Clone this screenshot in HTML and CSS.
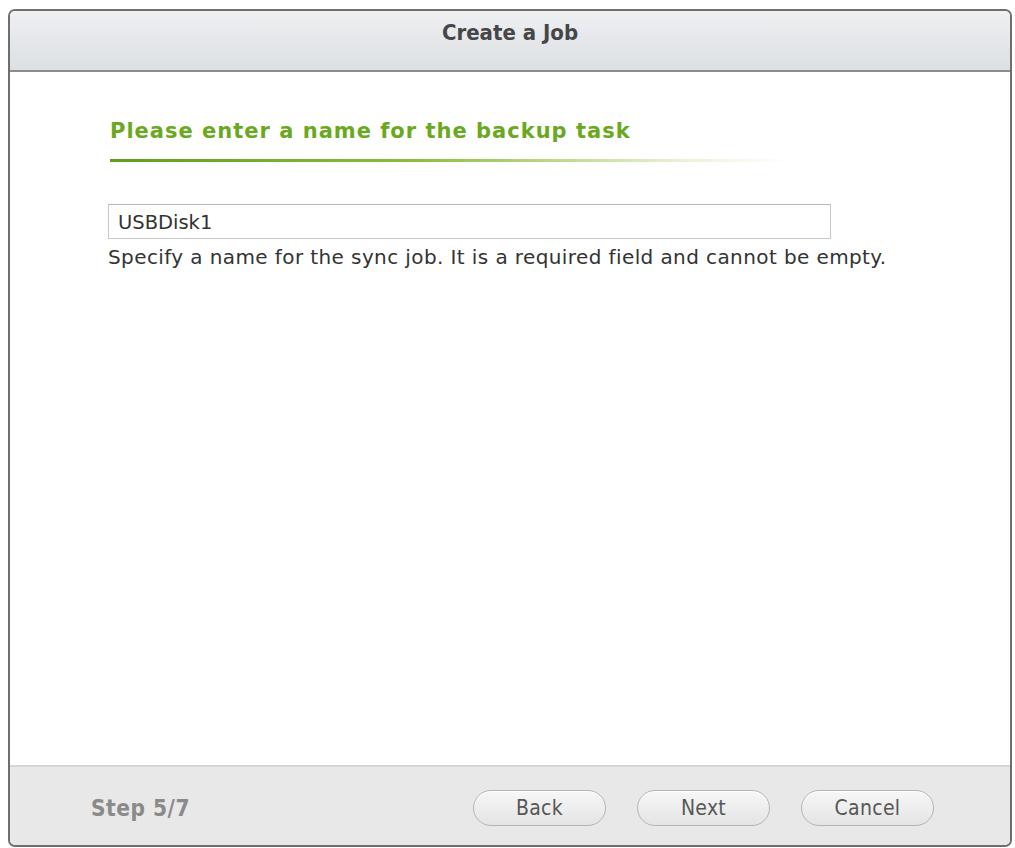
FILE: index.html
```html
<!DOCTYPE html>
<html>
<head>
<meta charset="utf-8">
<link rel="stylesheet" href="styles.css">
</head>
<body>
<div class="dialog">
  <div class="header">Create a Job</div>
  <div class="content">
    <h2 class="heading">Please enter a name for the backup task</h2>
    <div class="rule"></div>
    <input class="field" type="text" value="USBDisk1">
    <p class="help">Specify a name for the sync job. It is a required field and cannot be empty.</p>
  </div>
  <div class="footer">
    <span class="step">Step 5/7</span>
    <div class="buttons">
      <button class="btn">Back</button>
      <button class="btn">Next</button>
      <button class="btn">Cancel</button>
    </div>
  </div>
</div>
</body>
</html>
```
FILE: styles.css
```css
html, body {
  margin: 0;
  padding: 0;
  background: #ffffff;
}
body {
  padding: 9px 3px 0 8px;
  height: 848px;
  box-sizing: border-box;
  overflow: hidden;
}
.dialog {
  width: 1004px;
  height: 838px;
  box-sizing: border-box;
  border: 2px solid #6e6e6e;
  border-radius: 7px;
  display: flex;
  flex-direction: column;
  overflow: hidden;
  background: #ffffff;
}
.header {
  height: 61px;
  flex: none;
  box-sizing: border-box;
  border-bottom: 2px solid #8a8c8e;
  background: linear-gradient(#eef0f2, #dcdfe3);
  display: flex;
  align-items: center;
  justify-content: center;
  padding-bottom: 16px;
  font-family: "DejaVu Sans Condensed", "DejaVu Sans", sans-serif;
  font-weight: bold;
  font-size: 22px;
  color: #464646;
}
.content {
  flex: 1;
  padding: 46px 0 0 98px;
  font-family: "DejaVu Sans", Verdana, sans-serif;
}
.heading {
  margin: 0;
  font-size: 21px;
  letter-spacing: 1px;
  font-weight: bold;
  color: #6aa820;
  line-height: 26px;
  padding-left: 2px;
}
.rule {
  margin: 15px 0 0 2px;
  width: 680px;
  height: 3px;
  background: linear-gradient(to right, #5f9f1a 0%, #8dbd3a 45%, rgba(220,235,190,0.6) 85%, rgba(255,255,255,0) 100%);
}
.field {
  display: block;
  margin: 42px 0 0 0;
  width: 723px;
  height: 35px;
  box-sizing: border-box;
  border: 1px solid #c8c8c8;
  border-top-color: #b8b8b8;
  background: #ffffff;
  padding: 2px 9px 0;
  font-family: "DejaVu Sans", Verdana, sans-serif;
  font-size: 19.5px;
  color: #333333;
  outline: none;
}
.help {
  margin: 6px 0 0 0;
  font-size: 20px;
  letter-spacing: 0.4px;
  line-height: 24px;
  color: #333333;
}
.footer {
  height: 80px;
  flex: none;
  box-sizing: border-box;
  border-top: 2px solid #d6d6d6;
  background: #e8e8e8;
  display: flex;
  align-items: center;
  padding: 4px 76px 0 81px;
}
.step {
  font-family: "DejaVu Sans Condensed", "DejaVu Sans", sans-serif;
  font-weight: bold;
  font-size: 22.5px;
  letter-spacing: 0.5px;
  color: #8a8a8a;
  flex: 1;
}
.buttons {
  display: flex;
  gap: 31px;
}
.btn {
  width: 133px;
  height: 36px;
  border: 1px solid #b4b4b4;
  border-radius: 18px;
  background: linear-gradient(#f7f7f7, #e4e4e4);
  box-shadow: inset 0 1px 0 #ffffff;
  font-family: "DejaVu Sans Condensed", "DejaVu Sans", sans-serif;
  font-size: 21px;
  letter-spacing: 0.3px;
  color: #575757;
  padding: 0;
  cursor: pointer;
}
```
